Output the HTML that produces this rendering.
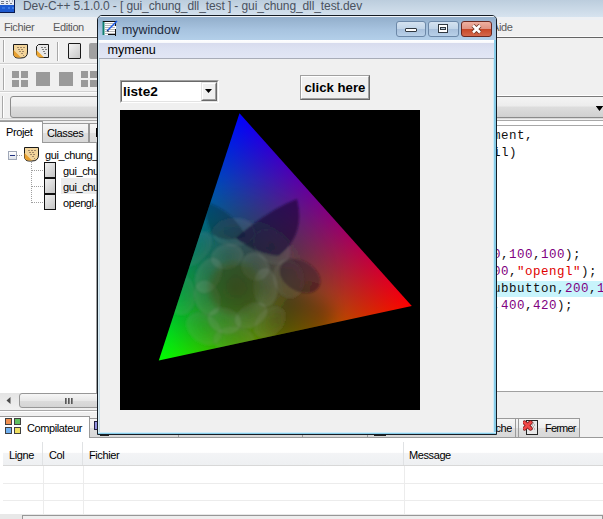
<!DOCTYPE html>
<html><head><meta charset="utf-8">
<style>
*{margin:0;padding:0;box-sizing:border-box}
html,body{width:603px;height:519px;overflow:hidden;background:#f0f0f0;font-family:"Liberation Sans",sans-serif}
.a{position:absolute}
.t{position:absolute;white-space:nowrap;line-height:1}
.ui{font-size:11px;letter-spacing:-0.4px;color:#000}
.code{position:absolute;white-space:pre;line-height:1;font-family:"Liberation Mono",monospace;font-size:12.5px;letter-spacing:0.5px;color:#101010}
.n{color:#800080}
.s{color:#e00000}
.gsq{position:absolute;background:#9a9a9a}
</style></head><body>
<div class="a" style="left:0;top:0;width:603px;height:519px;overflow:hidden">

<!-- ============ IDE title bar ============ -->
<div class="a" style="left:0;top:0;width:603px;height:17px;background:linear-gradient(#bccddd,#d6e3ef)"></div>
<svg class="a" style="left:0;top:0" width="16" height="14" viewBox="0 0 16 14">
  <rect x="0" y="0" width="15" height="13" fill="#0a1a50"/>
  <rect x="0" y="0" width="14" height="5" fill="#e8ecf4"/>
  <rect x="0" y="5" width="14" height="7" fill="#1e5ad0"/>
  <path d="M1 1.5h3M1 3.5h3M6 1.5h2M6 3.5h2M9 1h1M12 1h1M10 3.5h2" stroke="#707888" stroke-width="1"/>
  <path d="M2 8h3M8 8h2M12 8h2M9 7v2M13 7v2" stroke="#4a8af0" stroke-width="1"/>
</svg>
<div class="t" style="left:23px;top:0px;font-size:12px;letter-spacing:-0.1px;color:#4a5260">Dev-C++ 5.1.0.0 - [ gui_chung_dll_test ] - gui_chung_dll_test.dev</div>

<!-- ============ menu bar ============ -->
<div class="a" style="left:0;top:17px;width:603px;height:3px;background:#edf0f4"></div>
<div class="t ui" style="left:4px;top:22px;color:#5a5a5a">Fichier</div>
<div class="t ui" style="left:53px;top:22px;color:#5a5a5a">Edition</div>
<div class="t ui" style="left:492px;top:22px;color:#5a5a5a">Aide</div>
<div class="a" style="left:0;top:36px;width:603px;height:1px;background:#fafafa"></div>
<div class="a" style="left:0;top:37px;width:603px;height:1px;background:#646464"></div>

<!-- ============ toolbar 1 ============ -->
<div class="a" style="left:3px;top:40px;width:1px;height:22px;background:#a8a8a8"></div>
<div class="a" style="left:4px;top:40px;width:1px;height:22px;background:#fff"></div>
<!-- project icon -->
<svg class="a" style="left:12px;top:43px" width="17" height="16" viewBox="0 0 17 16">
  <path d="M1.5 1.5 H15.5 V9 Q15.5 15 9 15 H6 Q1.5 15 1.5 10 Z" fill="#f2d49a" stroke="#1a1a1a" stroke-width="1"/>
  <path d="M1.5 7 L9 14.5 H6 Q1.5 14.5 1.5 10 Z" fill="#e8a030"/>
  <path d="M5 4.5h2M8 4.5h2M11 4.5h2M6 6.5h2M9 6.5h2M7 8.5h2M10 8.5h2M9 10.5h2M11 12.5h1" stroke="#a08868" stroke-width="1"/>
</svg>
<svg class="a" style="left:35px;top:43px" width="15" height="16" viewBox="0 0 15 16">
  <path d="M3.5 1.5 H13.5 V14.5 H7 Q1.5 14.5 1.5 10 V3.5 Z" fill="#e8e8e8" stroke="#1a1a1a" stroke-width="1"/>
  <path d="M1.5 7 L9 14.5 H6 Q1.5 14.5 1.5 10 Z" fill="#f0a830"/>
  <path d="M6 4.5h2M9 4.5h2M7 6.5h2M10 6.5h2M8 8.5h2M9 10.5h2" stroke="#808080" stroke-width="1"/>
</svg>
<div class="a" style="left:57px;top:42px;width:1px;height:19px;background:#a8a8a8"></div>
<div class="a" style="left:58px;top:42px;width:1px;height:19px;background:#fff"></div>
<div class="a" style="left:68px;top:43px;width:13px;height:16px;border:1px solid #1a1a1a;border-radius:1px;background:linear-gradient(135deg,#f4f4f4,#c8c8c8)"></div>
<div class="a" style="left:89px;top:43px;width:10px;height:16px;border-radius:2px;background:#a0a0a0"></div>
<div class="a" style="left:0;top:63px;width:300px;height:1px;background:#d0d0d0"></div>
<div class="a" style="left:0;top:64px;width:300px;height:1px;background:#fbfbfb"></div>

<!-- ============ toolbar 2 ============ -->
<div class="a" style="left:3px;top:68px;width:1px;height:22px;background:#a8a8a8"></div>
<div class="a" style="left:4px;top:68px;width:1px;height:22px;background:#fff"></div>
<div class="gsq" style="left:12px;top:71px;width:7px;height:7px"></div>
<div class="gsq" style="left:21px;top:71px;width:7px;height:7px"></div>
<div class="gsq" style="left:12px;top:80px;width:7px;height:7px"></div>
<div class="gsq" style="left:21px;top:80px;width:7px;height:7px"></div>
<div class="gsq" style="left:36px;top:72px;width:14px;height:14px"></div>
<div class="gsq" style="left:59px;top:72px;width:14px;height:14px"></div>
<div class="gsq" style="left:81px;top:71px;width:7px;height:7px"></div>
<div class="gsq" style="left:90px;top:71px;width:7px;height:7px"></div>
<div class="gsq" style="left:81px;top:80px;width:7px;height:7px"></div>
<div class="gsq" style="left:90px;top:80px;width:7px;height:7px"></div>
<div class="a" style="left:0;top:91px;width:300px;height:1px;background:#d0d0d0"></div>
<div class="a" style="left:0;top:92px;width:300px;height:1px;background:#fbfbfb"></div>

<!-- ============ toolbar 3 ============ -->
<div class="a" style="left:2px;top:96px;width:1px;height:22px;background:#a8a8a8"></div>
<div class="a" style="left:3px;top:96px;width:1px;height:22px;background:#fff"></div>
<div class="a" style="left:10px;top:96px;width:200px;height:22px;border:1px solid #8c8c8c;border-radius:3px;background:linear-gradient(#f4f4f4 0,#ececec 45%,#dddddd 50%,#d0d0d0 100%)"></div>
<div class="a" style="left:496px;top:95px;width:107px;height:1px;background:#fff"></div>
<div class="a" style="left:496px;top:96px;width:107px;height:22px;border-top:1px solid #7a7a7a;border-bottom:1px solid #8a8a8a;background:linear-gradient(#f4f4f4 0,#ececec 45%,#dddddd 50%,#d0d0d0 100%)"></div>
<svg class="a" style="left:596px;top:106px" width="7" height="5"><path d="M0 0H7V0L3.5 4.5Z" fill="#000"/><path d="M0 0H7L3.5 5Z" fill="#000"/></svg>
<div class="a" style="left:0;top:118px;width:603px;height:1px;background:#d8d8d8"></div>
<div class="a" style="left:0;top:120px;width:603px;height:1px;background:#a8a8a8"></div>

<!-- ============ left tabs ============ -->
<div class="a" style="left:-1px;top:121px;width:44px;height:22px;background:#fff;border:1px solid #9a9a9a;border-bottom:none"></div>
<div class="t ui" style="left:6px;top:127px">Projet</div>
<div class="a" style="left:42px;top:123px;width:47px;height:19px;background:linear-gradient(#f6f6f6 0,#ececec 50%,#dedede 51%,#d8d8d8 100%);border:1px solid #9a9a9a;border-bottom:none"></div>
<div class="t ui" style="left:47px;top:128px">Classes</div>
<div class="a" style="left:89px;top:123px;width:12px;height:19px;background:linear-gradient(#f6f6f6 0,#ececec 50%,#dedede 51%,#d8d8d8 100%);border:1px solid #9a9a9a;border-bottom:none"></div>
<div class="a" style="left:96px;top:128px;width:2px;height:9px;background:#000"></div>
<div class="a" style="left:43px;top:142px;width:60px;height:1px;background:#9a9a9a"></div>

<!-- tree panel -->
<div class="a" style="left:0;top:143px;width:97px;height:250px;background:#fff"></div>
<div class="a" style="left:96px;top:143px;width:1px;height:250px;background:#a0a0a0"></div>
<!-- minus box -->
<div class="a" style="left:8px;top:151px;width:9px;height:9px;border:1px solid #a0a8b8;background:linear-gradient(#fff,#dde2ea)"></div>
<div class="a" style="left:10px;top:155px;width:5px;height:1px;background:#203080"></div>
<div class="a" style="left:17px;top:155px;width:6px;height:1px;background-image:repeating-linear-gradient(90deg,#a0a0a0 0 1px,transparent 1px 2px)"></div>
<svg class="a" style="left:23px;top:146px" width="17" height="16" viewBox="0 0 17 16">
  <path d="M1.5 1.5 H15.5 V9 Q15.5 15 9 15 H6 Q1.5 15 1.5 10 Z" fill="#f2d49a" stroke="#1a1a1a" stroke-width="1"/>
  <path d="M1.5 7 L9 14.5 H6 Q1.5 14.5 1.5 10 Z" fill="#e8a030"/>
  <path d="M5 4.5h2M8 4.5h2M11 4.5h2M6 6.5h2M9 6.5h2M7 8.5h2M10 8.5h2M9 10.5h2M11 12.5h1" stroke="#a08868" stroke-width="1"/>
</svg>
<div class="t ui" style="left:45px;top:150px;color:#000">gui_chung_dll_test</div>
<div class="a" style="left:31px;top:162px;width:1px;height:41px;background-image:repeating-linear-gradient(180deg,#a0a0a0 0 1px,transparent 1px 2px)"></div>
<div class="a" style="left:32px;top:170px;width:12px;height:1px;background-image:repeating-linear-gradient(90deg,#a0a0a0 0 1px,transparent 1px 2px)"></div>
<div class="a" style="left:32px;top:186px;width:12px;height:1px;background-image:repeating-linear-gradient(90deg,#a0a0a0 0 1px,transparent 1px 2px)"></div>
<div class="a" style="left:32px;top:202px;width:12px;height:1px;background-image:repeating-linear-gradient(90deg,#a0a0a0 0 1px,transparent 1px 2px)"></div>
<div class="a" style="left:44px;top:162px;width:12px;height:16px;border:1px solid #111;background:linear-gradient(135deg,#f0f0f0,#c4c4c4)"></div>
<div class="a" style="left:44px;top:178px;width:12px;height:16px;border:1px solid #111;background:linear-gradient(135deg,#f0f0f0,#c4c4c4)"></div>
<div class="a" style="left:44px;top:194px;width:12px;height:16px;border:1px solid #111;background:linear-gradient(135deg,#f0f0f0,#c4c4c4)"></div>
<div class="a" style="left:61px;top:178px;width:35px;height:16px;background:#ececec"></div>
<div class="t ui" style="left:63px;top:166px">gui_chung_dll.c</div>
<div class="t ui" style="left:63px;top:182px">gui_chung_dll.h</div>
<div class="t ui" style="left:63px;top:198px">opengl.c</div>

<!-- left hscroll -->
<div class="a" style="left:0;top:393px;width:97px;height:16px;background:linear-gradient(#e4e4e4,#f0f0f0)"></div>
<svg class="a" style="left:6px;top:397px" width="5" height="7"><path d="M4.5 0V7L0.5 3.5Z" fill="#4a4a4a"/></svg>
<div class="a" style="left:19px;top:393px;width:100px;height:15px;border:1px solid #979797;border-radius:3px;background:linear-gradient(#f6f6f6 0,#e8e8e8 50%,#dcdcdc 51%,#d4d4d4 100%)"></div>
<div class="a" style="left:65px;top:398px;width:2px;height:6px;background:linear-gradient(90deg,#404040,#a0a0a0)"></div>
<div class="a" style="left:68px;top:398px;width:2px;height:6px;background:linear-gradient(90deg,#404040,#a0a0a0)"></div>
<div class="a" style="left:71px;top:398px;width:2px;height:6px;background:linear-gradient(90deg,#404040,#a0a0a0)"></div>
<div class="a" style="left:0;top:410px;width:300px;height:1px;background:#a8a8a8"></div>
<div class="a" style="left:0;top:411px;width:300px;height:1px;background:#fff"></div>

<!-- ============ editor (right) ============ -->
<div class="a" style="left:496px;top:121px;width:107px;height:4px;background:#fff"></div>
<div class="a" style="left:496px;top:125px;width:107px;height:1px;background:#a8a8a8"></div>
<div class="a" style="left:496px;top:126px;width:107px;height:265px;background:#fff"></div>
<div class="a" style="left:496px;top:391px;width:107px;height:1px;background:#a0a0a0"></div>
<div class="a" style="left:496px;top:281px;width:107px;height:16px;background:#c8f4fc"></div>
<div class="code" style="left:493px;top:130px">ment,</div>
<div class="code" style="left:493px;top:147px">il)</div>
<div class="code" style="left:493px;top:249px"><span class="n">0</span>,<span class="n">100</span>,<span class="n">100</span>);</div>
<div class="code" style="left:493px;top:266px"><span class="n">00</span>,<span class="s">"opengl"</span>);</div>
<div class="code" style="left:493px;top:283px">ubbutton,<span class="n">200</span>,<span class="n">1</span></div>
<div class="code" style="left:493px;top:300px">,<span class="n">400</span>,<span class="n">420</span>);</div>

<!-- ============ bottom tabs ============ -->
<div class="a" style="left:-1px;top:416px;width:91px;height:22px;background:#fff;border:1px solid #9a9a9a;border-bottom:none"></div>
<div class="a" style="left:5px;top:418px;width:7px;height:7px;background:#f09050;border:1px solid #404040"></div>
<div class="a" style="left:14px;top:418px;width:7px;height:7px;background:#60c060;border:1px solid #404040"></div>
<div class="a" style="left:5px;top:427px;width:7px;height:7px;background:#70b0f0;border:1px solid #404040"></div>
<div class="a" style="left:14px;top:427px;width:7px;height:7px;background:#f0e060;border:1px solid #404040"></div>
<div class="t ui" style="left:27px;top:423px">Compilateur</div>
<div class="a" style="left:89px;top:418px;width:430px;height:19px;background:linear-gradient(#f6f6f6 0,#ececec 50%,#dedede 51%,#d8d8d8 100%);border:1px solid #9a9a9a;border-bottom:none"></div>
<div class="a" style="left:178px;top:418px;width:1px;height:19px;background:#9a9a9a"></div>
<div class="a" style="left:302px;top:418px;width:1px;height:19px;background:#9a9a9a"></div>
<div class="a" style="left:367px;top:418px;width:1px;height:19px;background:#9a9a9a"></div>
<div class="a" style="left:94px;top:421px;width:4px;height:9px;background:#9090e0;border:1px solid #202040"></div>
<div class="t ui" style="left:465px;top:423px;width:47px;text-align:right;overflow:hidden;direction:rtl">Recherche</div>
<div class="a" style="left:515px;top:418px;width:1px;height:19px;background:#9a9a9a"></div>
<div class="a" style="left:518px;top:418px;width:62px;height:19px;background:linear-gradient(#f6f6f6 0,#ececec 50%,#dedede 51%,#d8d8d8 100%);border:1px solid #9a9a9a;border-bottom:none"></div>
<svg class="a" style="left:523px;top:420px" width="16" height="16" viewBox="0 0 16 16">
  <rect x="3.5" y="0.5" width="11" height="14" fill="#e8e8e8" stroke="#222"/>
  <path d="M6 3h1M8 3h1M10 3h1M7 5h1M9 5h1M11 5h1M8 7h1M10 7h1M9 9h1M11 9h1" stroke="#888"/>
  <path d="M1.5 2.5 L7.5 8.5 M7.5 2.5 L1.5 8.5" stroke="#7a1818" stroke-width="4.4" stroke-linecap="round"/>
  <path d="M1.5 2.5 L7.5 8.5 M7.5 2.5 L1.5 8.5" stroke="#f04848" stroke-width="2.8" stroke-linecap="round"/>
</svg>
<div class="t ui" style="left:545px;top:423px;letter-spacing:-0.8px">Fermer</div>

<!-- list view -->
<div class="a" style="left:89px;top:437px;width:514px;height:1px;background:#9a9a9a"></div>
<div class="a" style="left:0;top:438px;width:603px;height:77px;background:#fff"></div>
<div class="a" style="left:3px;top:442px;width:600px;height:24px;background:linear-gradient(#ffffff 0,#ffffff 45%,#f3f4f6 50%,#eef0f2 100%);border-bottom:1px solid #d8d8d8"></div>
<div class="a" style="left:42px;top:442px;width:1px;height:23px;background:#e0e2e4"></div>
<div class="a" style="left:82px;top:442px;width:1px;height:23px;background:#e0e2e4"></div>
<div class="a" style="left:403px;top:442px;width:1px;height:23px;background:#e0e2e4"></div>
<div class="t ui" style="left:9px;top:449.5px">Ligne</div>
<div class="t ui" style="left:49px;top:449.5px">Col</div>
<div class="t ui" style="left:89px;top:449.5px">Fichier</div>
<div class="t ui" style="left:409px;top:449.5px">Message</div>
<div class="a" style="left:3px;top:483px;width:600px;height:1px;background:#ececec"></div>
<div class="a" style="left:3px;top:500px;width:600px;height:1px;background:#ececec"></div>
<div class="a" style="left:43px;top:466px;width:1px;height:48px;background:#ececec"></div>
<div class="a" style="left:83px;top:466px;width:1px;height:48px;background:#ececec"></div>
<div class="a" style="left:404px;top:466px;width:1px;height:48px;background:#ececec"></div>
<div class="a" style="left:0;top:514px;width:603px;height:5px;background:#e8e8e8"></div>
<div class="a" style="left:22px;top:515px;width:581px;height:4px;border:1px solid #979797;border-bottom:none;background:#eee"></div>

<div class="a" style="left:100px;top:435px;width:9px;height:1px;background:#202020"></div>
<div class="a" style="left:374px;top:435px;width:12px;height:1px;background:#202020"></div>
<!-- ============ dialog window ============ -->
<div class="a" style="left:97px;top:15px;width:400px;height:420px;border:1px solid #141c24;border-radius:5px 5px 0 0;background:#c8d8e4;overflow:hidden">
  <div class="a" style="left:0;top:0;width:398px;height:25px;background:linear-gradient(#92aecb,#a8c4e0 55%,#b4d0ea);border-top:1px solid #f0f4f8"></div>
  <div class="a" style="left:0;top:24px;width:1px;height:394px;background:#d8ecf4"></div>
  <div class="a" style="left:1px;top:24px;width:1px;height:394px;background:#c4d8e4"></div>
  <div class="a" style="left:395px;top:24px;width:1px;height:394px;background:#d0ecf8"></div>
  <div class="a" style="left:396px;top:24px;width:2px;height:394px;background:#88cce8"></div>
  <div class="a" style="left:0;top:416px;width:398px;height:1px;background:#d0ecf8"></div>
  <div class="a" style="left:0;top:417px;width:398px;height:1px;background:#88cce8"></div>
  <div class="a" style="left:2px;top:24px;width:393px;height:392px;background:#f0f0f0"></div>
</div>
<!-- window icon -->
<svg class="a" style="left:102px;top:20px" width="16" height="16" viewBox="0 0 16 16">
  <rect x="1" y="1" width="13" height="14" fill="#ffffff"/>
  <path d="M3 3.5h10M3 5.5h10M3 7.5h10M3 9.5h10M3 11.5h10M3 13.5h10" stroke="#b8b8b8" stroke-width="1"/>
  <path d="M1.5 1v14" stroke="#108070" stroke-width="2"/>
  <path d="M1 1.5h13M13.5 1v5M13.5 9v7M6 14.5h8" stroke="#111" stroke-width="1"/>
  <path d="M5 11 L15 1" stroke="#1a5ae8" stroke-width="1.5"/>
  <path d="M5 11 L7 12 L6 10Z" fill="#111"/>
</svg>
<div class="t" style="left:122px;top:23.5px;font-size:12.4px;color:#1e2a3c">mywindow</div>
<!-- caption buttons -->
<div class="a" style="left:396px;top:21px;width:30px;height:16px;border:1px solid #6c88a8;border-radius:3px;background:linear-gradient(#d4e2f0 0,#c0d4e8 50%,#a8c0dc 51%,#b8d0e8 100%)"></div>
<div class="a" style="left:405px;top:28px;width:12px;height:4px;border:1px solid #303840;border-radius:1px;background:#fff"></div>
<div class="a" style="left:428px;top:21px;width:31px;height:16px;border:1px solid #6c88a8;border-radius:3px;background:linear-gradient(#d4e2f0 0,#c0d4e8 50%,#a8c0dc 51%,#b8d0e8 100%)"></div>
<div class="a" style="left:438px;top:24px;width:10px;height:9px;border:1px solid #303840;background:#fff"></div>
<div class="a" style="left:440px;top:27px;width:6px;height:3px;border:1px solid #303840;background:#b8c8d8"></div>
<div class="a" style="left:461px;top:21px;width:31px;height:16px;border:1px solid #6a2820;border-radius:3px;background:linear-gradient(#eeb0a0 0,#e09484 47%,#c84828 53%,#d4684c 100%)"></div>
<svg class="a" style="left:469px;top:23px" width="15" height="12" viewBox="0 0 15 12">
  <path d="M4 2.5 L11 9.5 M11 2.5 L4 9.5" stroke="#6a3020" stroke-width="4.2"/>
  <path d="M4 2.5 L11 9.5 M11 2.5 L4 9.5" stroke="#fff" stroke-width="2.6"/>
</svg>
<!-- menu -->
<div class="a" style="left:99px;top:40px;width:395px;height:18px;background:linear-gradient(#ffffff 0,#f8f9fc 2.5px,#f4f6fb 3px,#d8dcee 3.5px,#dde2f2 50%,#e2e6f5 100%)"></div>
<div class="a" style="left:99px;top:58px;width:395px;height:1px;background:#a8acb8"></div>
<div class="t" style="left:107.5px;top:44px;font-size:12.6px;color:#000">mymenu</div>

<!-- combo liste2 -->
<div class="a" style="left:120px;top:80px;width:99px;height:23px;border-top:1px solid #a0a0a0;border-left:1px solid #a0a0a0;border-right:1px solid #fff;border-bottom:1px solid #fff;background:#fff"></div>
<div class="a" style="left:121px;top:81px;width:97px;height:21px;border-top:1px solid #696969;border-left:1px solid #696969;border-right:1px solid #e3e3e3;border-bottom:1px solid #e3e3e3"></div>
<div class="t" style="left:123px;top:85px;font-size:13.6px;font-weight:bold;color:#000">liste2</div>
<div class="a" style="left:201px;top:82px;width:16px;height:19px;border-top:1px solid #e3e3e3;border-left:1px solid #e3e3e3;border-right:1px solid #696969;border-bottom:1px solid #696969;background:#f0f0f0"></div>
<div class="a" style="left:202px;top:83px;width:14px;height:17px;border-top:1px solid #fff;border-left:1px solid #fff;border-right:1px solid #a0a0a0;border-bottom:1px solid #a0a0a0"></div>
<svg class="a" style="left:205px;top:89px" width="8" height="4"><path d="M0 0H7L3.5 4Z" fill="#000"/></svg>

<!-- button click here -->
<div class="a" style="left:300px;top:75px;width:70px;height:25px;background:#f0f0f0;border:1px solid #a0a0a0;border-right-color:#696969;border-bottom-color:#696969"></div>
<div class="a" style="left:301px;top:76px;width:68px;height:23px;border-top:1px solid #fff;border-left:1px solid #fff;border-right:1px solid #a0a0a0;border-bottom:1px solid #a0a0a0"></div>
<div class="t" style="left:304.5px;top:81px;font-size:13.2px;font-weight:bold;color:#000">click here</div>

<!-- GL area -->
<svg class="a" style="left:120px;top:110px" width="300" height="300" viewBox="0 0 300 300">
  <defs>
    <linearGradient id="gR" gradientUnits="userSpaceOnUse" x1="291.8" y1="196.1" x2="79.22" y2="126.7"><stop offset="0" stop-color="#f00"/><stop offset="1" stop-color="#000"/></linearGradient>
    <linearGradient id="gG" gradientUnits="userSpaceOnUse" x1="38.8" y1="250.5" x2="206.49" y2="100.64"><stop offset="0" stop-color="#0f0"/><stop offset="1" stop-color="#000"/></linearGradient>
    <linearGradient id="gB" gradientUnits="userSpaceOnUse" x1="119.5" y1="3.3" x2="166.73" y2="222.99"><stop offset="0" stop-color="#00f"/><stop offset="1" stop-color="#000"/></linearGradient>
    <filter id="soft" x="-10%" y="-10%" width="120%" height="120%"><feGaussianBlur stdDeviation="1.2"/></filter><filter id="soft2" x="-30%" y="-30%" width="160%" height="160%"><feGaussianBlur stdDeviation="8"/></filter>
    <clipPath id="triclip"><polygon points="119.5,3.3 291.8,196.1 38.8,250.5"/></clipPath>
    <radialGradient id="haze"><stop offset="0.00" stop-color="#1c2018" stop-opacity="0.400"/><stop offset="0.10" stop-color="#1c2018" stop-opacity="0.389"/><stop offset="0.20" stop-color="#1c2018" stop-opacity="0.357"/><stop offset="0.30" stop-color="#1c2018" stop-opacity="0.309"/><stop offset="0.40" stop-color="#1c2018" stop-opacity="0.250"/><stop offset="0.50" stop-color="#1c2018" stop-opacity="0.187"/><stop offset="0.60" stop-color="#1c2018" stop-opacity="0.128"/><stop offset="0.70" stop-color="#1c2018" stop-opacity="0.078"/><stop offset="0.80" stop-color="#1c2018" stop-opacity="0.040"/><stop offset="0.90" stop-color="#1c2018" stop-opacity="0.014"/><stop offset="1.00" stop-color="#1c2018" stop-opacity="0.000"/></radialGradient>
    <radialGradient id="petal"><stop offset="0" stop-color="#808880" stop-opacity="0.12"/><stop offset="0.8" stop-color="#909a90" stop-opacity="0.18"/><stop offset="0.93" stop-color="#a0a8a0" stop-opacity="0.2"/><stop offset="1" stop-color="#101410" stop-opacity="0.15"/></radialGradient><radialGradient id="petal2"><stop offset="0" stop-color="#707870" stop-opacity="0.08"/><stop offset="0.8" stop-color="#889088" stop-opacity="0.13"/><stop offset="0.93" stop-color="#98a098" stop-opacity="0.15"/><stop offset="1" stop-color="#101410" stop-opacity="0.12"/></radialGradient><radialGradient id="disk"><stop offset="0" stop-color="#3a4008" stop-opacity="0.55"/><stop offset="0.7" stop-color="#3a4a0c" stop-opacity="0.45"/><stop offset="1" stop-color="#3a5010" stop-opacity="0"/></radialGradient>
  </defs>
  <rect width="300" height="300" fill="#000"/>
  <g style="isolation:isolate">
    <polygon points="119.5,3.3 291.8,196.1 38.8,250.5" fill="url(#gR)"/>
    <polygon points="119.5,3.3 291.8,196.1 38.8,250.5" fill="url(#gG)" style="mix-blend-mode:screen"/>
    <polygon points="119.5,3.3 291.8,196.1 38.8,250.5" fill="url(#gB)" style="mix-blend-mode:screen"/>
  </g>
  <g clip-path="url(#triclip)"><g filter="url(#soft)">
    <circle cx="122" cy="172" r="110" fill="url(#haze)"/>
    <ellipse cx="151.4" cy="136.7" rx="21.6" ry="15.7" transform="rotate(41.4 151.4 136.7)" fill="url(#petal2)"/><ellipse cx="168.6" cy="168.5" rx="20.2" ry="15.7" transform="rotate(79.9 168.6 168.5)" fill="url(#petal2)"/><ellipse cx="149.7" cy="212.2" rx="18.7" ry="12.9" transform="rotate(134.6 149.7 212.2)" fill="url(#petal2)"/><ellipse cx="113.8" cy="229.5" rx="21.1" ry="13.2" transform="rotate(181.3 113.8 229.5)" fill="url(#petal2)"/><ellipse cx="84.2" cy="218.7" rx="19.8" ry="14.3" transform="rotate(217.1 84.2 218.7)" fill="url(#petal2)"/><ellipse cx="60.1" cy="184.1" rx="21.4" ry="15.7" transform="rotate(263.7 60.1 184.1)" fill="url(#petal2)"/><ellipse cx="74.9" cy="139.1" rx="21.4" ry="12.7" transform="rotate(314.1 74.9 139.1)" fill="url(#petal2)"/><ellipse cx="114.2" cy="122.3" rx="22.5" ry="14.3" transform="rotate(359.2 114.2 122.3)" fill="url(#petal2)"/>
    <path d="M86,92 Q112,100 126,126 Q106,134 92,124 Q84,108 86,92Z" fill="#061420" opacity="0.3"/>
    <path d="M116,128 Q148,100 177,89 Q186,126 158,146 Q136,144 116,128Z" fill="#100830" opacity="0.58"/>
    <ellipse cx="180" cy="166" rx="22" ry="15" transform="rotate(30 180 166)" fill="#201020" opacity="0.4"/>
    <path d="M160,185 Q190,180 215,200 L205,230 L150,232Z" fill="#000" opacity="0.22" filter="url(#soft2)"/>
    <ellipse cx="107.1" cy="146.7" rx="16.8" ry="12.8" transform="rotate(-14.2 107.1 146.7)" fill="url(#petal)"/><ellipse cx="135.2" cy="156.7" rx="15.1" ry="13.5" transform="rotate(43.4 135.2 156.7)" fill="url(#petal)"/><ellipse cx="145.4" cy="177.5" rx="20.0" ry="12.4" transform="rotate(89.0 145.4 177.5)" fill="url(#petal)"/><ellipse cx="131.1" cy="205.5" rx="18.2" ry="11.5" transform="rotate(149.7 131.1 205.5)" fill="url(#petal)"/><ellipse cx="104.5" cy="210.6" rx="17.6" ry="13.2" transform="rotate(197.9 104.5 210.6)" fill="url(#petal)"/><ellipse cx="87.4" cy="188.1" rx="18.8" ry="12.8" transform="rotate(249.9 87.4 188.1)" fill="url(#petal)"/><ellipse cx="88.6" cy="165.5" rx="19.3" ry="12.4" transform="rotate(295.4 88.6 165.5)" fill="url(#petal)"/>
    <circle cx="115" cy="178" r="30" fill="url(#disk)"/>
  </g></g>
</svg>

</div>
</body></html>
